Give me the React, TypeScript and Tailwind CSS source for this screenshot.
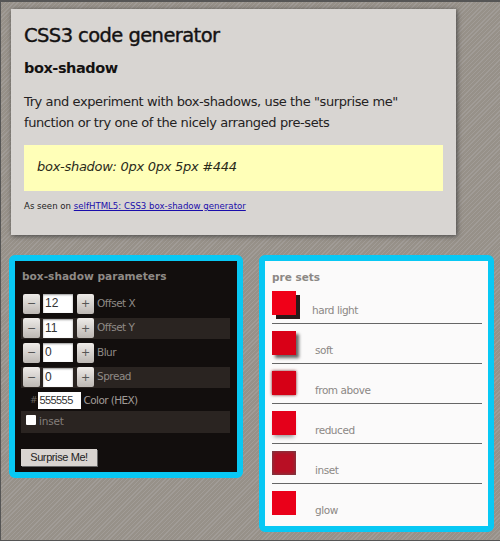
import React from "react";

const font = "font-['DejaVu_Sans',sans-serif]";

function Stepper({ label, value, striped }: { label: string; value: string; striped?: boolean }) {
  const btn =
    "w-[17px] h-[20px] flex items-center justify-center text-[11px] leading-none text-[#555] bg-gradient-to-b from-[#eeebe8] to-[#bdb8b4] rounded-[2px]";
  return (
    <div className={`flex items-center h-[21px] pl-[2px] ${striped ? "bg-[#2a2421]" : ""}`}>
      <div className={btn}>−</div>
      <div className="ml-[3px] w-[30px] h-[19px] bg-white pl-[2px] font-['Liberation_Sans',sans-serif] text-[12px] leading-[19px] text-[#333] shadow-[inset_0_1px_2px_#999]">
        {value}
      </div>
      <div className={`${btn} ml-[4px]`}>+</div>
      <span className="ml-[3px] text-[10.5px] tracking-[-0.5px] text-[#8f8a86]">{label}</span>
    </div>
  );
}

function Preset({ label, textClass, shadow, swatch, last }: { label: string; textClass: string; shadow: string; swatch?: string; last?: boolean }) {
  return (
    <div className={`flex h-[40px] pt-[7px] ${last ? "" : "border-b border-[#666]"}`}>
      <div className={`w-[24px] h-[24px] shrink-0 ${swatch ?? "bg-[#e60017]"} ${shadow}`} />
      <span className={`mt-[12px] text-[10.5px] leading-[14px] tracking-[-0.45px] text-[#8c8885] ${textClass}`}>{label}</span>
    </div>
  );
}

export default function App() {
  return (
    <div
      className={`${font} w-[500px] h-[541px] overflow-hidden border-t-2 border-l border-b border-[#555] bg-[#9a948f] bg-[repeating-linear-gradient(135deg,#a19c97_0px,#a19c97_1px,#979189_1px,#979189_3px)] pt-[7px]`}
    >
      <section className="ml-[10px] w-[445px] h-[226px] bg-[#d8d5d2] shadow-[1px_1px_5px_#444] pl-[13px] pr-[13px] pt-[15px] text-[#141212]">
        <h1 className="text-[19.5px] leading-[24px] font-normal tracking-[-0.58px] [-webkit-text-stroke:0.4px_#141212]">CSS3 code generator</h1>
        <h2 className="mt-[10px] text-[14.5px] leading-[20px] font-bold tracking-[-0.45px]">box-shadow</h2>
        <p className="mt-[14px] text-[13px] leading-[20.5px] text-[#242222] tracking-[-0.4px]">
          Try and experiment with box-shadows, use the "surprise me"
          <br />
          function or try one of the nicely arranged pre-sets
        </p>
        <div className="mt-[12px] h-[46px] bg-[#ffffb8] pl-[13px] text-[13px] leading-[44px] italic text-[#2a2a18] tracking-[-0.28px]">
          box-shadow: 0px 0px 5px #444
        </div>
        <p className="mt-[9px] text-[8.6px] leading-[13px] text-[#222]">
          As seen on <span className="text-[#1a0dab] underline">selfHTML5: CSS3 box-shadow generator</span>
        </p>
      </section>

      <div className="flex items-start mt-[20px] ml-[8px]">
        <section className="w-[234px] h-[223px] rounded-[6px] border-[6px] border-[#08c8f4] bg-[#120e0d] pl-[7px] pr-[7px] pt-[8px]">
          <h3 className="text-[10.6px] leading-[14px] font-bold text-[#8f8a86]">box-shadow parameters</h3>
          <div className="mt-[10px] -ml-[1px] flex flex-col gap-[3.5px]">
            <Stepper label="Offset X" value="12" />
            <Stepper label="Offset Y" value="11" striped />
            <Stepper label="Blur" value="0" />
            <Stepper label="Spread" value="0" striped />
          </div>
          <div className="flex items-center h-[18px] mt-[4px] pl-[8px]">
            <span className="text-[9px] text-[#6b6662]">#</span>
            <div className="w-[43px] h-[17px] bg-white pl-[2px] font-['Liberation_Sans',sans-serif] text-[11px] tracking-[-0.6px] leading-[17px] text-[#333]">555555</div>
            <span className="ml-[3px] text-[10.5px] tracking-[-0.6px] text-[#a09b97]">Color (HEX)</span>
          </div>
          <div className="mt-[1px] -ml-[1px] flex items-center h-[22px] bg-[#2a2421] pl-[5px]">
            <div className="w-[10px] h-[10px] bg-white rounded-[1px] -mt-[3px]" />
            <span className="ml-[3px] text-[10.5px] tracking-[-0.2px] text-[#857f7b]">inset</span>
          </div>
          <div className="mt-[16px] -ml-[1px] w-[76px] h-[17px] bg-[#d9d4d0] font-['Liberation_Sans',sans-serif] text-[11px] tracking-[-0.4px] leading-[17px] text-center text-[#222] shadow-[1px_1px_0_#666]">
            Surprise Me!
          </div>
        </section>

        <section className="ml-[16px] w-[235px] h-[277px] rounded-[6px] border-[6px] border-[#08c8f4] bg-[#fbfafa] pl-[7px] pr-[6px] pt-[9px]">
          <h3 className="text-[10.5px] leading-[14px] font-bold text-[#8c8885]">pre sets</h3>
          <div>
            <Preset label="hard light" textClass="ml-[16px]" shadow="shadow-[4px_4px_0_#2a1a1a]" swatch="bg-[#f00018]" />
            <Preset label="soft" textClass="ml-[19px]" shadow="shadow-[3px_3px_3px_#666]" swatch="bg-[#d90017]" />
            <Preset label="from above" textClass="ml-[19px]" shadow="shadow-[0_0_3px_#772222]" swatch="bg-[#d60016]" />
            <Preset label="reduced" textClass="ml-[19px]" shadow="shadow-[0_4px_4px_-2px_#999]" swatch="bg-[#e4001a]" />
            <Preset label="inset" textClass="ml-[19px]" shadow="shadow-[inset_0_0_4px_#555]" swatch="bg-[#b80f24]" />
            <Preset label="glow" textClass="ml-[19px]" shadow="" swatch="bg-[#ea0019]" last />
          </div>
        </section>
      </div>
    </div>
  );
}
